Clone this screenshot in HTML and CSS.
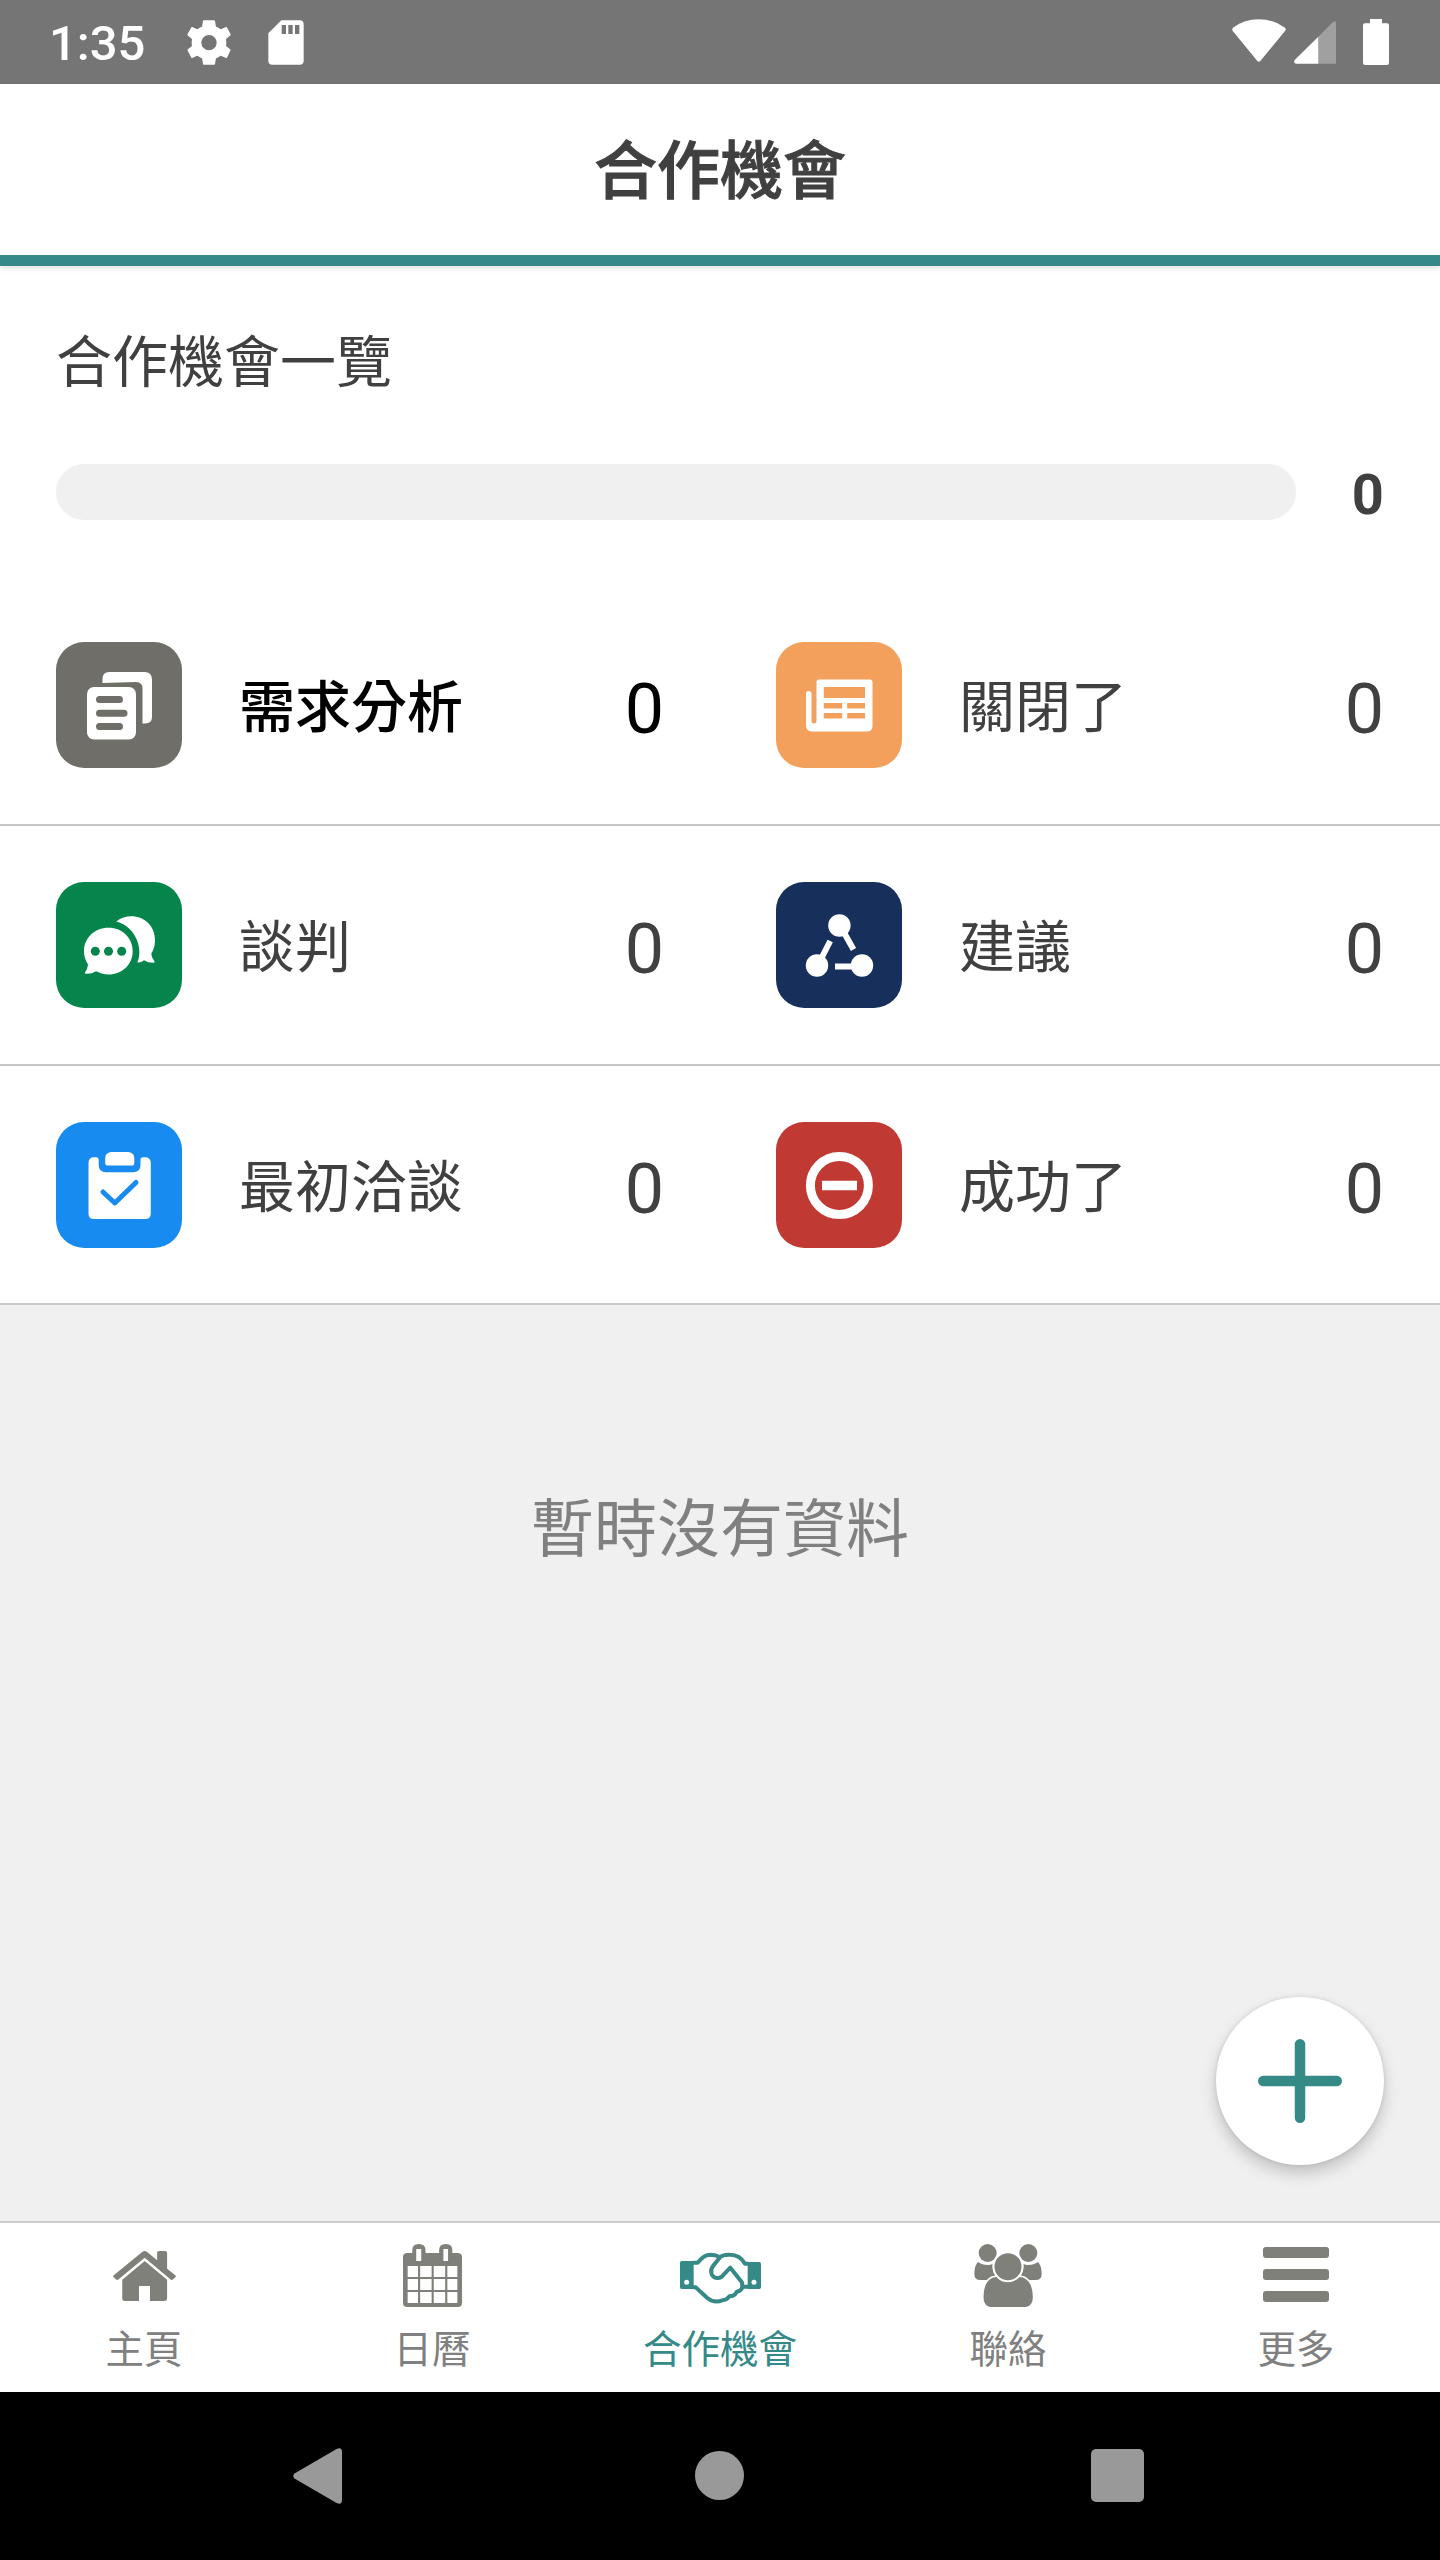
FILE: index.html
```html
<!DOCTYPE html>
<html lang="zh-Hant">
<head>
<meta charset="utf-8">
<meta name="viewport" content="width=device-width">
<title>合作機會</title>
<link rel="stylesheet" href="styles.css">
</head>
<body>
<div class="screen">
  <div class="status">
    <span class="time">1:35</span>
    <svg class="gear" width="44" height="45" viewBox="562 59 132 135"><path fill="#fff" stroke="#fff" stroke-width="4" stroke-linejoin="round" fill-rule="evenodd" d="M612 62H644L647 80Q655 83 663 89L680 82L691 103L677 115Q679 127 677 138L691 149L680 171L663 164Q655 170 647 173L644 191H612L609 173Q601 170 593 164L577 171L565 149L579 138Q577 127 579 115L565 103L577 82L593 89Q601 83 609 80ZM628 102A25 25 0 1 0 628 152A25 25 0 1 0 628 102Z"/></svg>
    <svg class="sd" width="36" height="45" viewBox="805 59 108 135"><path fill="#fff" fill-rule="evenodd" d="M845 60H900Q912 60 912 72V181Q912 193 900 193H818Q806 193 806 181V99ZM846 74V101H859V74ZM866 74V101H879V74ZM886 74V101H899V74Z"/></svg>
    <span class="grow"></span>
    <svg class="wifi" width="54" height="43" viewBox="215 58 162 129"><path fill="#fff" d="M218 84Q252 59 296 59Q340 59 374 84Q378 88 374 94L300 184Q296 188 291 184L218 95Q214 89 218 84Z"/></svg>
    <svg class="signal" width="42" height="43" viewBox="401 64 126 129"><path fill="#a0a0a0" d="M474 111L518 67Q527 61 527 70V192H474Z"/><path fill="#fff" d="M474 111V192H407Q398 190 403 181Z"/></svg>
    <svg class="battery" width="26" height="46" viewBox="609 57 78 138"><path fill="#fff" d="M630 57H666V70H681Q687 70 687 76V189Q687 195 681 195H615Q609 195 609 189V76Q609 70 615 70H630Z"/></svg>
  </div>

  <header class="header"><h1>合作機會</h1></header>

  <main class="main">
    <section class="overview">
      <h2>合作機會一覽</h2>
      <div class="progress"><div class="track"></div><b>0</b></div>
    </section>

    <section class="stages">
      <div class="stage active">
        <svg class="tile gray" viewBox="0 0 126 126"><path fill="#fff" d="M46.5 41V37Q46.5 30 53.5 30H88.5Q96 30 96 37.500V75Q96 81.500 89 81.500H86.500V46.500Q86.500 40 80 40Z"/><rect x="31" y="45" width="49" height="52.500" rx="7" fill="#fff"/><path stroke="#6f6e69" stroke-width="7" stroke-linecap="round" d="M43.500 57.500H63.500M43.500 71.200H68M43.500 84.500H63.500"/></svg>
        <span class="name">需求分析</span><span class="count">0</span>
      </div>
      <div class="stage">
        <svg class="tile orange" viewBox="0 0 126 126"><path fill="#fff" fill-rule="evenodd" d="M40.500 40Q40.500 37.500 43 37.500H94Q96.500 37.500 96.500 40V84Q96.500 89.500 91 89.500H36Q30 89.500 30 83V51.500Q30 49 32.700 49Q35.500 49 35.500 51.500V79Q35.500 81.500 38 81.500Q40.500 81.500 40.500 79ZM47.800 45V56H89V45ZM47.800 61V66.500H66.200V61ZM71.200 61V66.500H89V61ZM47.800 71V76.500H66.200V71ZM71.200 71V76.500H89V71Z"/></svg>
        <span class="name">關閉了</span><span class="count">0</span>
      </div>
      <div class="stage">
        <svg class="tile green" viewBox="0 0 126 126"><path fill="#fff" d="M52.500 45.800C66.500 45.800 76.700 56 76.700 69.200C76.700 82.500 66 92.500 52.500 92.500Q46 92.500 40 89.300Q36 92 30 91.800Q28 91.600 29.500 89.500Q31.500 87 32 82.500Q28 76.500 28 69.200C28 56 38.500 45.800 52.500 45.800Z"/><path fill="#fff" d="M60.300 39.500C65 35.500 70 34.200 75 34.200C89 34.200 99 44.500 99 58Q99 66 95.300 71.500Q95.300 75.500 98 78.500Q99.500 81 97 80.800Q92 80.800 88 78.200Q86 80 83 80.500Q80.500 80.600 82 78.500C86.500 68 81 45 60.300 39.500Z"/><g fill="#05854b"><circle cx="39.300" cy="69.200" r="4.500"/><circle cx="52.500" cy="69.200" r="4.500"/><circle cx="65.700" cy="69.200" r="4.500"/></g></svg>
        <span class="name">談判</span><span class="count">0</span>
      </div>
      <div class="stage">
        <svg class="tile navy" viewBox="0 0 126 126"><g fill="#fff"><circle cx="63.400" cy="43.500" r="11.200"/><circle cx="41" cy="83.500" r="11.200"/><circle cx="86" cy="83.500" r="11.200"/></g><path stroke="#fff" stroke-width="6" d="M66 47L77.500 67.500M43 81L54.200 59M59 84.400H82"/></svg>
        <span class="name">建議</span><span class="count">0</span>
      </div>
      <div class="stage last">
        <svg class="tile blue" viewBox="0 0 126 126"><path fill="#fff" d="M38 35.300H40Q42.700 35.300 42.700 38V43Q42.700 50.300 50 50.300H77Q84.500 50.300 84.500 43V38Q84.500 35.300 87 35.300H89Q94.800 35.300 94.800 41V91.500Q94.800 97 89 97H38Q32.500 97 32.500 91.500V41Q32.500 35.300 38 35.300Z"/><path fill="#fff" d="M55 30H72.500Q78.300 31 78.300 36V41Q78.300 43.600 75.500 43.600H52Q49.200 43.600 49.200 41V36Q49.200 31 55 30Z"/><path fill="none" stroke="#178bf0" stroke-width="5" stroke-linecap="round" stroke-linejoin="round" d="M47 70L58.800 81L80 60.500"/></svg>
        <span class="name">最初洽談</span><span class="count">0</span>
      </div>
      <div class="stage last">
        <svg class="tile red" viewBox="0 0 126 126"><circle cx="63.400" cy="63.500" r="29" fill="none" stroke="#fff" stroke-width="9"/><rect x="46" y="58.700" width="35" height="9.600" fill="#fff" rx="0.500"/></svg>
        <span class="name">成功了</span><span class="count">0</span>
      </div>
    </section>

    <div class="empty">
      <p>暫時沒有資料</p>
      <button class="fab" aria-label="新增"><svg width="84" height="84" viewBox="0 0 84 84"><path stroke="#358a87" stroke-width="10.500" stroke-linecap="round" d="M5.250 42H78.750M42 5.250V78.750"/></svg></button>
    </div>
  </main>

  <nav class="tabs">
    <a class="tab"><span class="ico"><svg width="63" height="50" viewBox="316 150 177 150" preserveAspectRatio="none"><g fill="#80807a"><path d="M318 223L399 152Q405 148 411 152L440 178V155Q440 150 445 150H463Q468 150 468 155V203L491 223Q494 226 491 229L485 235Q481 239 477 235L405 170L332 235Q327 239 324 235L318 229Q315 226 318 223Z"/><path d="M405 180L468 236V293Q468 300 461 300H420V255H389V300H349Q342 300 342 293V236Z"/></g></svg></span>主頁</a>
    <a class="tab"><span class="ico"><svg width="59" height="63" viewBox="1128 132 165 189" preserveAspectRatio="none"><path fill="#80807a" fill-rule="evenodd" d="M1154 159V151Q1154 132 1172 132Q1191 132 1191 151V159H1229V151Q1229 132 1248 132Q1266 132 1266 151V159H1280Q1293 159 1293 171V309Q1293 321 1281 321H1140Q1128 321 1128 309V171Q1128 159 1140 159ZM1165 147V183H1179V147ZM1241 147V183H1254V147ZM1141 198V231H1170V198ZM1176 198V231H1208V198ZM1214 198V231H1246V198ZM1252 198V231H1280V198ZM1141 237V270H1170V237ZM1176 237V270H1208V237ZM1214 237V270H1246V237ZM1252 237V270H1280V237ZM1141 276V309H1170V276ZM1176 276V309H1208V276ZM1214 276V309H1246V276ZM1252 276V309H1280V276Z"/></svg></span>日曆</a>
    <a class="tab on"><span class="ico"><svg class="shake" width="81" height="53" viewBox="360 156 243 159"><path fill="#358a87" fill-rule="evenodd" d="M365 183H401V267H365Q360 267 360 261V189Q360 183 365 183ZM380 239A7.500 7.500 0 1 0 380 254A7.500 7.500 0 1 0 380 239ZM563 186H598Q603 186 603 192V261Q603 267 598 267H563ZM582 239A7.500 7.500 0 1 0 582 254A7.500 7.500 0 1 0 582 239Z"/><g fill="none" stroke="#358a87" stroke-width="12" stroke-linejoin="round"><path d="M399 188H413C425 174 433 165 451 164Q468 164 480 172"/><path d="M565 191H555C545 173 532 164 510 164Q488 163 479 173L459 198Q450 210 455 223Q461 235 474 234Q483 234 488 227L511 203L542 242Q549 250 546 259"/><path d="M565 260H547Q545 273 530 275Q525 288 508 289Q500 300 487 301C467 309 455 305 442 294L407 262H399"/></g></svg></span>合作機會</a>
    <a class="tab"><span class="ico"><svg width="68" height="63" viewBox="41 132 204 189"><g fill="#80807a"><circle cx="82" cy="159" r="27"/><circle cx="204" cy="159" r="27"/><path d="M53 186Q65 195 82 195Q92 195 97 191Q95 213 106 227Q92 230 84 240H60Q42 240 42 222Q42 197 53 186Z"/><path d="M233 186Q221 195 204 195Q194 195 189 191Q191 213 180 227Q194 230 202 240H226Q244 240 244 222Q244 197 233 186Z"/><path stroke="#fff" stroke-width="5" d="M95 231Q143 218 191 231Q220 245 220 292Q220 324 190 324H97Q67 324 67 292Q67 245 95 231Z"/><circle cx="143" cy="200" r="43.500" stroke="#fff" stroke-width="6"/></g></svg></span>聯絡</a>
    <a class="tab"><span class="ico"><svg class="bars" width="66" height="55" viewBox="0 0 66 55"><g fill="#80807a"><rect width="66" height="11" rx="3"/><rect y="22" width="66" height="11" rx="3"/><rect y="44" width="66" height="11" rx="3"/></g></svg></span>更多</a>
  </nav>

  <div class="sysnav">
    <svg width="49" height="56" viewBox="0 0 49 56"><path fill="#999" d="M1.500 25.500L44 .8Q49 -1 49 4V52Q49 57 44 55.200L1.500 30.500Q-1 28 1.500 25.500Z"/></svg>
    <svg class="home" width="49" height="49" viewBox="0 0 49 49"><circle cx="24.500" cy="24.500" r="24.500" fill="#999"/></svg>
    <svg class="recent" width="53" height="53" viewBox="0 0 53 53"><rect width="53" height="53" rx="5" fill="#999"/></svg>
  </div>
</div>
</body>
</html>
```
FILE: styles.css
```css
* { box-sizing: border-box; }

body {
  margin: 0;
  font-family: Roboto, "Noto Sans CJK TC", sans-serif;
  color: #404040;
  background: #fff;
}

h1, h2, p { margin: 0; }
svg { display: block; flex: none; }

.screen {
  width: 1440px;
  height: 2560px;
  display: flex;
  flex-direction: column;
  overflow: hidden;
}

.status {
  height: 84px;
  flex: none;
  display: flex;
  align-items: flex-start;
  padding: 0 51px 0 49px;
  background: #757575;
  color: #fff;
}
.time {
  width: 138px;
  font-size: 49px;
  font-weight: 500;
  line-height: 58px;
  padding-top: 15px;
}
.gear { margin-top: 20px; }
.sd { margin: 20px 0 0 37px; }
.grow { flex: 1; }
.wifi { margin-top: 19px; }
.signal { margin: 21px 27px 0 8px; }
.battery { margin-top: 19px; }

.header {
  position: relative;
  height: 182px;
  flex: none;
  display: flex;
  align-items: center;
  justify-content: center;
  padding-top: 4px;
  border-bottom: 11px solid #358a87;
  box-shadow: 0 2px 6px rgba(0, 0, 0, .12);
}
.header h1 {
  font-size: 63px;
  font-weight: 500;
  line-height: 90px;
  -webkit-text-stroke: 1px;
}

.main {
  flex: 1;
  display: flex;
  flex-direction: column;
}

.overview {
  height: 320px;
  flex: none;
  padding: 57px 56px 0;
}
.overview h2 {
  font-size: 56px;
  font-weight: 400;
  line-height: 80px;
}
.progress {
  display: flex;
  align-items: center;
  justify-content: space-between;
  height: 56px;
  margin-top: 61px;
}
.track {
  width: 1240px;
  height: 56px;
  border-radius: 28px;
  background: #f0f0f0;
}
.progress b {
  padding-top: 5px;
  font-size: 56px;
  font-weight: 700;
  line-height: 66px;
}

.stages {
  display: grid;
  grid-template-columns: 1fr 1fr;
}
.stage {
  height: 240px;
  display: flex;
  align-items: center;
  padding: 0 56px;
  border-bottom: 2px solid #c8c8c8;
}
.stage.last {
  height: 239px;
  padding-top: 1px;
}
.active { color: #000; }
.tile {
  width: 126px;
  height: 126px;
  border-radius: 28px;
}
.gray { background: #6f6e69; }
.orange { background: #f3a05c; }
.green { background: #05854b; }
.navy { background: #17305b; }
.blue { background: #178bf0; }
.red { background: #c13933; }
.name {
  flex: 1;
  margin-left: 57px;
  padding-top: 5px;
  font-size: 56px;
  line-height: 80px;
}
.active .name { font-weight: 500; }
.count {
  padding-top: 8px;
  font-size: 70px;
  line-height: 82px;
}

.empty {
  position: relative;
  flex: 1;
  background: #f0f0f0;
  text-align: center;
}
.empty p {
  padding-top: 180px;
  font-size: 63px;
  line-height: 90px;
  color: #808080;
}
.fab {
  position: absolute;
  right: 56px;
  bottom: 56px;
  width: 168px;
  height: 168px;
  display: flex;
  align-items: center;
  justify-content: center;
  border: 0;
  padding: 0;
  border-radius: 50%;
  background: #fff;
  box-shadow: 0 8px 16px rgba(0, 0, 0, .2), 0 0 4px rgba(0, 0, 0, .1);
}

.tabs {
  height: 171px;
  flex: none;
  display: grid;
  grid-template-columns: repeat(5, 1fr);
  border-top: 2px solid #ccc;
  padding-top: 21px;
}
.tab {
  display: flex;
  flex-direction: column;
  align-items: center;
  font-size: 38.5px;
  line-height: 56px;
  color: #808080;
}
.tab.on { color: #358a87; }
.ico {
  height: 63px;
  display: flex;
  align-items: center;
  margin-bottom: 15px;
}
.shake { margin-top: 5px; }
.bars { margin-bottom: 2px; }

.sysnav {
  height: 168px;
  flex: none;
  display: flex;
  align-items: center;
  justify-content: space-between;
  padding: 0 296px 0 293px;
  background: #000;
}
.home { margin: 0 0 2px 5px; }
.recent { margin-bottom: 1px; }
```
